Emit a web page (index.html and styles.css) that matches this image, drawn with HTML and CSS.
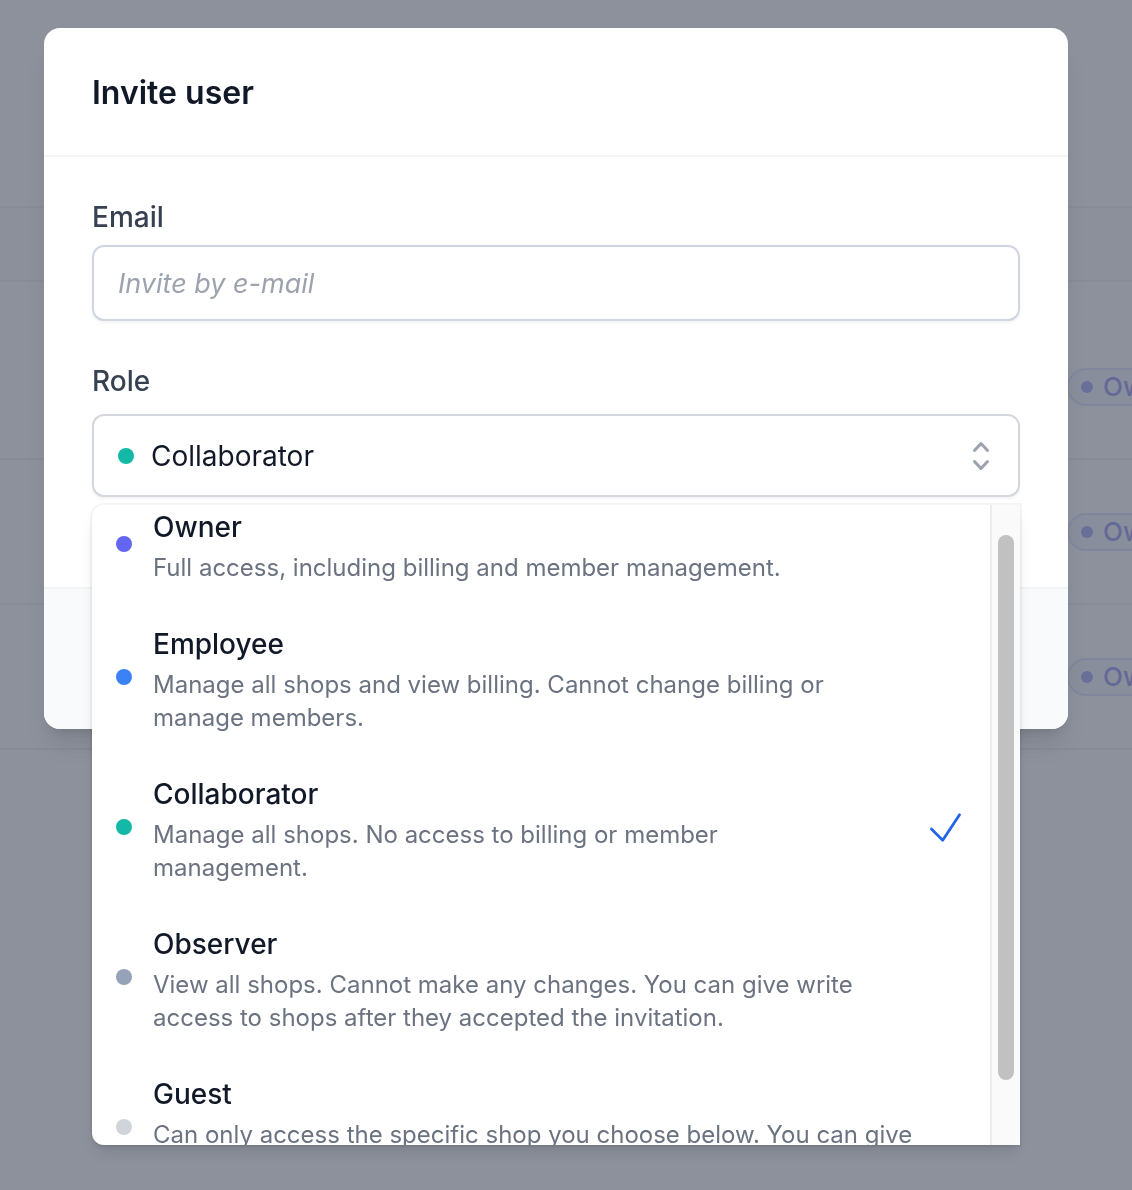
FILE: index.html
```html
<!DOCTYPE html>
<html lang="en">
<head>
<meta charset="utf-8">
<title>Invite user</title>
<link rel="stylesheet" href="styles.css">
</head>
<body>
<div class="page">
  <div class="page-top"></div>
  <div class="thead"></div>
  <div class="spacer"></div>
  <div class="row"><span class="badge"><i class="bdot"></i>Owner</span></div>
  <div class="row"><span class="badge"><i class="bdot"></i>Owner</span></div>
  <div class="row"><span class="badge"><i class="bdot"></i>Owner</span></div>
</div>
<div class="overlay"></div>
<div class="modal-layer">
  <div class="modal">
    <div class="m-head"><h2 class="m-title">Invite user</h2></div>
    <div class="m-body">
      <div class="field">
        <label class="label" for="email">Email</label>
        <input id="email" class="input" type="email" placeholder="Invite by e-mail">
      </div>
      <div class="field field-role">
        <label class="label">Role</label>
        <div class="select-wrap">
          <button class="select" type="button">
            <span class="dot dot-teal sel-dot"></span>
            <span class="sel-label">Collaborator</span>
            <svg class="chev" viewBox="0 0 20 20" width="40" height="40" fill="#9ca3af"><path fill-rule="evenodd" d="M10 3a.75.75 0 01.55.24l3.25 3.5a.75.75 0 11-1.1 1.02L10 4.852 7.3 7.76a.75.75 0 01-1.1-1.02l3.25-3.5A.75.75 0 0110 3zm-3.760 9.2a.75.75 0 011.06.04l2.7 2.908 2.7-2.908a.75.75 0 111.1 1.02l-3.25 3.5a.75.75 0 01-1.1 0l-3.25-3.5a.75.75 0 01.04-1.06z" clip-rule="evenodd"/></svg>
          </button>
          <div class="dropdown">
            <div class="list">
              <ul class="list-inner">
                <li class="opt">
                  <span class="dot dot-indigo opt-dot"></span>
                  <div class="opt-text">
                    <div class="opt-title">Owner</div>
                    <div class="opt-desc">Full access, including billing and member management.</div>
                  </div>
                </li>
                <li class="opt">
                  <span class="dot dot-blue opt-dot"></span>
                  <div class="opt-text">
                    <div class="opt-title">Employee</div>
                    <div class="opt-desc">Manage all shops and view billing. Cannot change billing or manage members.</div>
                  </div>
                </li>
                <li class="opt">
                  <span class="dot dot-teal opt-dot"></span>
                  <div class="opt-text">
                    <div class="opt-title">Collaborator</div>
                    <div class="opt-desc">Manage all shops. No access to billing or member management.</div>
                  </div>
                  <svg class="check" viewBox="0 0 24 24" width="45" height="45" fill="none" stroke="#2563eb" stroke-width="1.5"><path stroke-linecap="round" stroke-linejoin="round" d="M4.5 12.75l6 6 9-13.5"/></svg>
                </li>
                <li class="opt">
                  <span class="dot dot-slate opt-dot"></span>
                  <div class="opt-text">
                    <div class="opt-title">Observer</div>
                    <div class="opt-desc">View all shops. Cannot make any changes. You can give write access to shops after they accepted the invitation.</div>
                  </div>
                </li>
                <li class="opt">
                  <span class="dot dot-light opt-dot"></span>
                  <div class="opt-text">
                    <div class="opt-title">Guest</div>
                    <div class="opt-desc">Can only access the specific shop you choose below. You can give write access to more shops later.</div>
                  </div>
                </li>
              </ul>
            </div>
            <div class="track"><div class="thumb"></div></div>
          </div>
        </div>
      </div>
    </div>
    <div class="m-foot"></div>
  </div>
</div>
</body>
</html>
```
FILE: styles.css
```css
html, body {
  margin: 0;
  padding: 0;
  width: 1132px;
  height: 1190px;
  overflow: hidden;
  font-family: Inter, "Noto Sans", "Liberation Sans", sans-serif;
}

/* background page */
.page {
  background: #ffffff;
  height: 1190px;
}
.page-top {
  height: 206px;
  border-bottom: 2px solid #e5e7eb;
}
.thead {
  height: 72px;
  background: #f9fafb;
  border-bottom: 2px solid #e5e7eb;
}
.spacer {
  height: 32px;
  border-bottom: 1px solid #f3f4f6;
}
.row {
  height: 145px;
  box-sizing: border-box;
  border-bottom: 2px solid #e5e7eb;
  display: flex;
  align-items: center;
  padding-left: 1067px;
}
.badge {
  display: inline-flex;
  align-items: center;
  gap: 10px;
  height: 38px;
  box-sizing: border-box;
  padding: 0 16px 0 12px;
  border: 2px solid #c7d2fe;
  background: #eef2ff;
  border-radius: 19px;
  font-size: 26px;
  font-weight: 500;
  color: #4f46e5;
  white-space: nowrap;
}
.bdot {
  width: 12px;
  height: 12px;
  border-radius: 50%;
  background: #6366f1;
}

.overlay {
  position: fixed;
  inset: 0;
  background: rgba(107, 114, 128, 0.78);
}

/* modal */
.modal-layer {
  position: fixed;
  inset: 0;
  box-sizing: border-box;
  padding: 28px 0 0 44px;
}
.modal {
  width: 1024px;
  background: #ffffff;
  border-radius: 16px;
  box-shadow: 0 20px 25px -5px rgba(0, 0, 0, 0.1), 0 8px 10px -6px rgba(0, 0, 0, 0.1);
}
.m-head {
  padding: 37px 48px 34px;
  border-bottom: 2px solid #f3f4f6;
}
.m-title {
  margin: 0;
  font-size: 32px;
  line-height: 56px;
  font-weight: 600;
  color: #111827;
}
.m-body {
  padding: 40px 48px 90px;
}
.label {
  display: block;
  font-size: 28px;
  line-height: 40px;
  font-weight: 500;
  color: #374151;
}
.input {
  display: block;
  margin: 8px 0 0;
  width: 100%;
  height: 76px;
  box-sizing: border-box;
  border: 2px solid #cfd6e1;
  border-radius: 12px;
  padding: 0 24px;
  font-family: inherit;
  font-size: 27px;
  font-style: italic;
  color: #111827;
  background: #fff;
  box-shadow: 0 2px 3px rgba(0, 0, 0, 0.05);
  outline: none;
}
.input::placeholder {
  color: #9ca3af;
  font-style: italic;
}
.field-role {
  margin-top: 40px;
}
.select-wrap {
  position: relative;
  margin-top: 13px;
}
.select {
  display: flex;
  align-items: center;
  width: 100%;
  height: 83px;
  box-sizing: border-box;
  border: 2px solid #d4d8de;
  border-radius: 12px;
  background: #ffffff;
  padding: 0 17px 0 24px;
  font-family: inherit;
  font-size: 28px;
  color: #111827;
  box-shadow: 0 2px 3px rgba(0, 0, 0, 0.05);
  cursor: default;
}
.dot {
  display: block;
  flex: none;
  width: 16px;
  height: 16px;
  border-radius: 50%;
}
.dot-teal { background: #14b8a6; }
.dot-indigo { background: #6366f1; }
.dot-blue { background: #3b82f6; }
.dot-slate { background: #94a3b8; }
.dot-light { background: #d1d5db; }
.sel-dot {
  margin-right: 17px;
}
.sel-label {
  flex: 1;
  text-align: left;
}
.chev {
  flex: none;
}

/* dropdown */
.dropdown {
  position: absolute;
  top: calc(100% + 8px);
  left: 0;
  right: 0;
  height: 640px;
  display: flex;
  background: #ffffff;
  border-radius: 12px 0 0 12px;
  box-shadow: 0 10px 15px -3px rgba(0, 0, 0, 0.1), 0 4px 6px -4px rgba(0, 0, 0, 0.1), 0 0 0 2px rgba(0, 0, 0, 0.04);
  z-index: 10;
}
.list {
  flex: 1;
  overflow: hidden;
  border-radius: 12px 0 0 12px;
}
.list-inner {
  list-style: none;
  margin: -20px 0 0;
  padding: 0;
}
.opt {
  display: flex;
  align-items: center;
  padding: 18px 22px 18px 24px;
}
.opt-dot {
  margin-right: 21px;
}
.opt-text {
  flex: 1;
  padding-right: 52px;
}
.opt-title {
  font-size: 28px;
  line-height: 48px;
  font-weight: 500;
  color: #111827;
}
.opt-desc {
  font-size: 24px;
  line-height: 33px;
  color: #6b7280;
}
.check {
  flex: none;
  margin-left: 12px;
}
.track {
  flex: none;
  width: 30px;
  box-sizing: border-box;
  background: #fafafa;
  border-left: 2px solid #ececec;
  display: flex;
  justify-content: center;
}
.thumb {
  width: 16px;
  height: 545px;
  margin-top: 30px;
  background: #c1c1c1;
  border-radius: 8px;
}

.m-foot {
  height: 140px;
  background: #f9fafb;
  border-top: 2px solid #f3f4f6;
  border-radius: 0 0 16px 16px;
}
```
